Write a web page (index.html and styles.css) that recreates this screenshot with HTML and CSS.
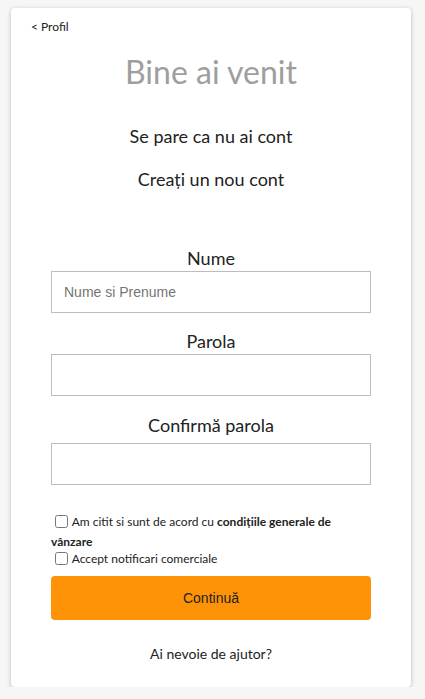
FILE: index.html
```html
<!DOCTYPE html>
<html lang="ro">
<head>
<meta charset="utf-8">
<title>Bine ai venit</title>
<link rel="stylesheet" href="styles.css">
</head>
<body>
<div class="card">
  <a class="back" href="#">&lt; Profil</a>
  <h1 class="title">Bine ai venit</h1>
  <p class="lead">Se pare ca nu ai cont</p>
  <p class="lead lead-2">Creați un nou cont</p>
  <form class="form">
    <label class="field-label" for="nume">Nume</label>
    <input class="field" id="nume" type="text" placeholder="Nume si Prenume">
    <label class="field-label" for="parola">Parola</label>
    <input class="field" id="parola" type="password">
    <label class="field-label field-label-3" for="confirm">Confirmă parola</label>
    <input class="field" id="confirm" type="password">
    <div class="checks">
      <label class="check"><input type="checkbox"> Am citit si sunt de acord cu <b>condițiile generale de vânzare</b></label>
      <label class="check check-2"><input type="checkbox"> Accept notificari comerciale</label>
    </div>
    <button class="btn" type="button">Continuă</button>
  </form>
  <p class="help">Ai nevoie de ajutor?</p>
</div>
</body>
</html>
```
FILE: styles.css
```css
html, body {
  margin: 0;
  padding: 0;
}
body {
  background: #f6f6f6;
  font-family: Lato, "Noto Sans", sans-serif;
  color: #222;
}
.card {
  margin: 8px 0 0 11px;
  width: 400px;
  height: 679px;
  box-sizing: border-box;
  background: #fff;
  border-radius: 4px;
  box-shadow: 0 1px 4px rgba(0,0,0,0.25);
  padding: 11px 20px 0;
  display: flex;
  flex-direction: column;
  align-items: center;
}
.back {
  align-self: flex-start;
  font-size: 12px;
  color: #222;
  text-decoration: none;
  line-height: 15px;
}
.title {
  margin: 18px 0 0;
  font-size: 32px;
  font-weight: 400;
  color: #9e9e9e;
  line-height: 40px;
}
.lead {
  margin: 33px 0 0;
  font-size: 18px;
  line-height: 22px;
}
.lead-2 {
  margin-top: 21px;
}
.form {
  width: 320px;
  margin-top: 57px;
  display: flex;
  flex-direction: column;
  align-items: center;
}
.field-label {
  font-size: 18px;
  line-height: 22px;
  margin-top: 17px;
  margin-bottom: 2px;
}
.field-label:first-child {
  margin-top: 0;
}
.field-label-3 {
  margin-top: 18px;
  margin-bottom: 7px;
}
.field {
  width: 320px;
  height: 42px;
  box-sizing: border-box;
  border: 1px solid #bdbdbd;
  border-radius: 0;
  padding: 0 12px;
  font-family: Arial, "Liberation Sans", sans-serif;
  font-size: 14px;
  color: #333;
  background: #fff;
}
.field::placeholder {
  color: #757575;
}
.checks {
  width: 320px;
  margin-top: 27px;
  font-size: 12px;
  line-height: 20px;
}
.check {
  display: block;
}
.check-2 {
  margin-top: -3px;
}
.check input {
  margin: 0 1px 0 4px;
  width: 13px;
  height: 13px;
  vertical-align: -2px;
}
.check b {
  font-weight: 700;
}
.btn {
  width: 320px;
  height: 44px;
  margin-top: 7px;
  border: 0;
  border-radius: 4px;
  background: #ff9308;
  color: #222;
  font-family: Arial, "Liberation Sans", sans-serif;
  font-size: 14px;
}
.help {
  margin: 25px 0 0;
  font-size: 14px;
  line-height: 18px;
}
```
